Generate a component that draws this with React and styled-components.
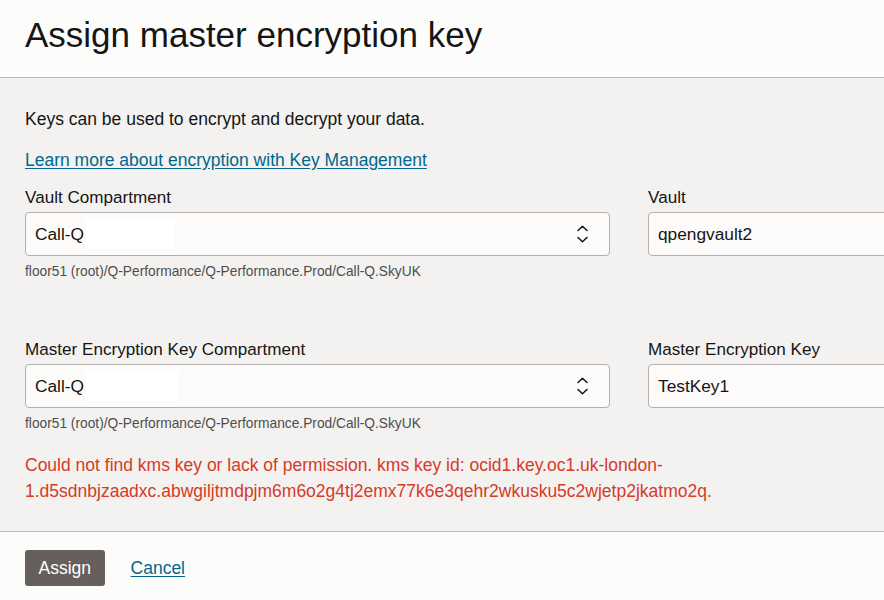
import React from "react";
import styled, { createGlobalStyle } from "styled-components";

const Global = createGlobalStyle`
  html, body { margin: 0; padding: 0; overflow: hidden; background: #f3f2f1; }
  body { font-family: "Liberation Sans", Arial, sans-serif; color: #161513; }
`;

const Page = styled.div`
  width: 1258px;
  display: flex;
  flex-direction: column;
`;

const Header = styled.header`
  height: 77px;
  background: #fcfcfb;
  border-bottom: 1px solid #b9b8b6;
  display: flex;
  align-items: center;
  padding: 0 25px;
  box-sizing: content-box;
`;

const Title = styled.h1`
  margin: 0;
  font-size: 35px;
  font-weight: 400;
  line-height: 1;
  margin-top: -9px;
  color: #161513;
`;

const Body = styled.main`
  background: #f3f2f1;
  padding: 29px 25px 27px;
`;

const Intro = styled.p`
  margin: 0;
  font-size: 17.5px;
  line-height: 24px;
`;

const Link = styled.a`
  display: inline-block;
  margin-top: 17px;
  font-size: 17.5px;
  line-height: 24px;
  color: #00688c;
  text-decoration: underline;
  text-underline-offset: 2px;
`;

const Grid = styled.div`
  display: grid;
  grid-template-columns: 585px 585px;
  column-gap: 38px;
  row-gap: 56px;
  margin-top: 14px;
`;

const Field = styled.div`
  display: flex;
  flex-direction: column;
`;

const Label = styled.label`
  font-size: 17.1px;
  line-height: 24px;
  margin-bottom: 2px;
`;

const Control = styled.div`
  height: 44px;
  box-sizing: border-box;
  border: 1px solid #b3b0ad;
  border-radius: 4px;
  background: #fcfbfa;
  display: flex;
  align-items: center;
  padding: 0 21px 0 9px;
  font-size: 17.3px;
  color: #161513;
`;

const Value = styled.span`
  flex: 1;
  display: flex;
  align-items: center;
`;

const Redacted = styled.span`
  display: inline-block;
  width: ${(p) => p.$w}px;
  height: 30px;
  background: #ffffff;
  margin-left: 2px;
`;

const Help = styled.div`
  font-size: 13.75px;
  line-height: 20px;
  margin-top: 6px;
  color: #4f4d4b;
`;

const ErrorText = styled.p`
  margin: 18px 0 0;
  font-size: 17.5px;
  line-height: 26px;
  color: #d63b25;
  max-width: 700px;
`;

const Footer = styled.footer`
  background: #fcfcfb;
  border-top: 1px solid #b9b8b6;
  padding: 18px 25px 20px;
  display: flex;
  align-items: center;
  gap: 26px;
`;

const Button = styled.button`
  height: 36px;
  padding: 0 13.5px;
  border: none;
  border-radius: 3px;
  background: #665f5b;
  color: #ffffff;
  font-family: "Liberation Sans", Arial, sans-serif;
  font-size: 17.5px;
`;

const Cancel = styled.a`
  font-size: 17.5px;
  color: #00688c;
  text-decoration: underline;
  text-underline-offset: 2px;
`;

const Chevrons = () => (
  <svg width="11" height="18" viewBox="0 0 11 18" fill="none" stroke="#161513" strokeWidth="1.5" strokeLinecap="round" strokeLinejoin="round">
    <path d="M1 5.5 L5.5 1.2 L10 5.5" />
    <path d="M1 12.5 L5.5 16.8 L10 12.5" />
  </svg>
);

export default function App() {
  return (
    <>
      <Global />
      <Page>
        <Header>
          <Title>Assign master encryption key</Title>
        </Header>
        <Body>
          <Intro>Keys can be used to encrypt and decrypt your data.</Intro>
          <Link href="#">Learn more about encryption with Key Management</Link>
          <Grid>
            <Field>
              <Label>Vault Compartment</Label>
              <Control>
                <Value>Call-Q<Redacted $w={89} /></Value>
                <Chevrons />
              </Control>
              <Help>floor51 (root)/Q-Performance/Q-Performance.Prod/Call-Q.SkyUK</Help>
            </Field>
            <Field>
              <Label>Vault</Label>
              <Control>
                <Value>qpengvault2</Value>
                <Chevrons />
              </Control>
            </Field>
            <Field>
              <Label>Master Encryption Key Compartment</Label>
              <Control>
                <Value>Call-Q<Redacted $w={92} /></Value>
                <Chevrons />
              </Control>
              <Help>floor51 (root)/Q-Performance/Q-Performance.Prod/Call-Q.SkyUK</Help>
            </Field>
            <Field>
              <Label>Master Encryption Key</Label>
              <Control>
                <Value>TestKey1</Value>
                <Chevrons />
              </Control>
            </Field>
          </Grid>
          <ErrorText>
            Could not find kms key or lack of permission. kms key id: ocid1.key.oc1.uk-london-1.d5sdnbjzaadxc.abwgiljtmdpjm6m6o2g4tj2emx77k6e3qehr2wkusku5c2wjetp2jkatmo2q.
          </ErrorText>
        </Body>
        <Footer>
          <Button>Assign</Button>
          <Cancel href="#">Cancel</Cancel>
        </Footer>
      </Page>
    </>
  );
}
